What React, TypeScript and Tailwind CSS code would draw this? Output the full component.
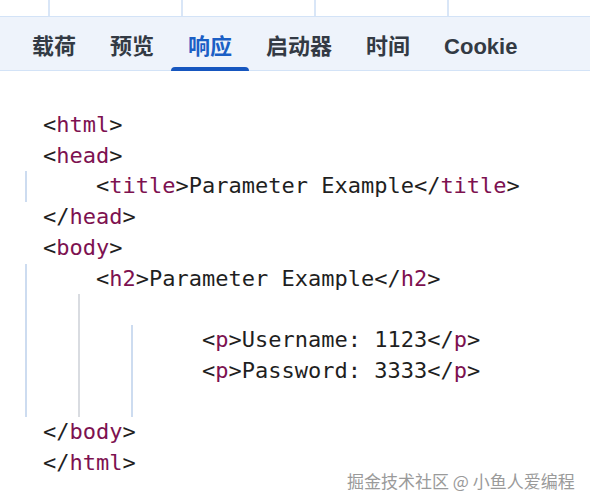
import React from "react";

type Seg = { t: string; tag?: boolean };

const tabs = ["载荷", "预览", "响应", "启动器", "时间", "Cookie"];

// each line: indent (chars), guide columns, segments
const lines: { indent: number; guides: number[]; segs: Seg[] }[] = [
  { indent: 0, guides: [], segs: [{ t: "<" }, { t: "html", tag: true }, { t: ">" }] },
  { indent: 0, guides: [], segs: [{ t: "<" }, { t: "head", tag: true }, { t: ">" }] },
  {
    indent: 4,
    guides: [0],
    segs: [
      { t: "<" },
      { t: "title", tag: true },
      { t: ">Parameter Example</" },
      { t: "title", tag: true },
      { t: ">" },
    ],
  },
  { indent: 0, guides: [], segs: [{ t: "</" }, { t: "head", tag: true }, { t: ">" }] },
  { indent: 0, guides: [], segs: [{ t: "<" }, { t: "body", tag: true }, { t: ">" }] },
  {
    indent: 4,
    guides: [0],
    segs: [
      { t: "<" },
      { t: "h2", tag: true },
      { t: ">Parameter Example</" },
      { t: "h2", tag: true },
      { t: ">" },
    ],
  },
  { indent: 0, guides: [0, 1], segs: [] },
  {
    indent: 12,
    guides: [0, 1, 2],
    segs: [{ t: "<" }, { t: "p", tag: true }, { t: ">Username: 1123</" }, { t: "p", tag: true }, { t: ">" }],
  },
  {
    indent: 12,
    guides: [0, 1, 2],
    segs: [{ t: "<" }, { t: "p", tag: true }, { t: ">Password: 3333</" }, { t: "p", tag: true }, { t: ">" }],
  },
  { indent: 0, guides: [0, 1, 2], segs: [] },
  { indent: 0, guides: [], segs: [{ t: "</" }, { t: "body", tag: true }, { t: ">" }] },
  { indent: 0, guides: [], segs: [{ t: "</" }, { t: "html", tag: true }, { t: ">" }] },
];

const guideLeft = ["left-[25px]", "left-[78px]", "left-[131px]"];
const guideColor = ["bg-[#cddcf0]", "bg-[#d9dce1]", "bg-[#cddcf0]"];

export default function App() {
  return (
    <div className="relative h-[504px] w-[590px] overflow-hidden bg-white">
      {/* table header strip */}
      <div className="flex h-[17px] border-b border-[#d3e3f7]">
        <div className="w-[50px] shrink-0 border-r-2 border-[#d9e6f7]" />
        <div className="w-[133px] shrink-0 border-r-2 border-[#d9e6f7]" />
        <div className="w-[133px] shrink-0 border-r-2 border-[#d9e6f7]" />
        <div className="w-[133px] shrink-0 border-r-2 border-[#d9e6f7]" />
        <div className="flex-1" />
      </div>

      {/* tabs */}
      <div className="flex h-[54px] items-stretch border-b border-[#d3e3f7] bg-[#eef3fb] pl-[15px] font-['Liberation_Sans','Noto_Sans_CJK_SC',sans-serif]">
        {tabs.map((t) => {
          const active = t === "响应";
          return (
            <div
              key={t}
              className={
                "relative flex items-center px-[17px] pt-[6px] text-[22px] font-semibold " +
                (active ? "text-[#1b5fc5]" : "text-[#333a44]")
              }
            >
              {t}
              {active && (
                <div className="absolute bottom-[-1px] left-0 right-0 h-[4px] rounded-t-[4px] bg-[#1656bf]" />
              )}
            </div>
          );
        })}
      </div>

      {/* code */}
      <div className="pt-[39px] font-['DejaVu_Sans_Mono',monospace] text-[22px] leading-[30.73px] text-[#1f1f1f]">
        {lines.map((line, i) => (
          <div key={i} className="relative h-[30.73px] whitespace-pre pl-[43px]">
            {line.guides.map((g) => (
              <span key={g} className={"absolute inset-y-0 w-[2px] " + guideLeft[g] + " " + guideColor[g]} />
            ))}
            {" ".repeat(line.indent)}
            {line.segs.map((s, j) => (
              <span key={j} className={s.tag ? "text-[#7d1150]" : undefined}>
                {s.t}
              </span>
            ))}
          </div>
        ))}
      </div>

      {/* watermark */}
      <div className="absolute left-[347px] top-[470px] font-['Noto_Sans_CJK_SC',sans-serif] text-[17px] leading-[22px] text-[#9a9a9a] [text-shadow:0_0_2px_#fff,0_0_1px_#fff]">
        掘金技术社区 @ 小鱼人爱编程
      </div>
    </div>
  );
}
